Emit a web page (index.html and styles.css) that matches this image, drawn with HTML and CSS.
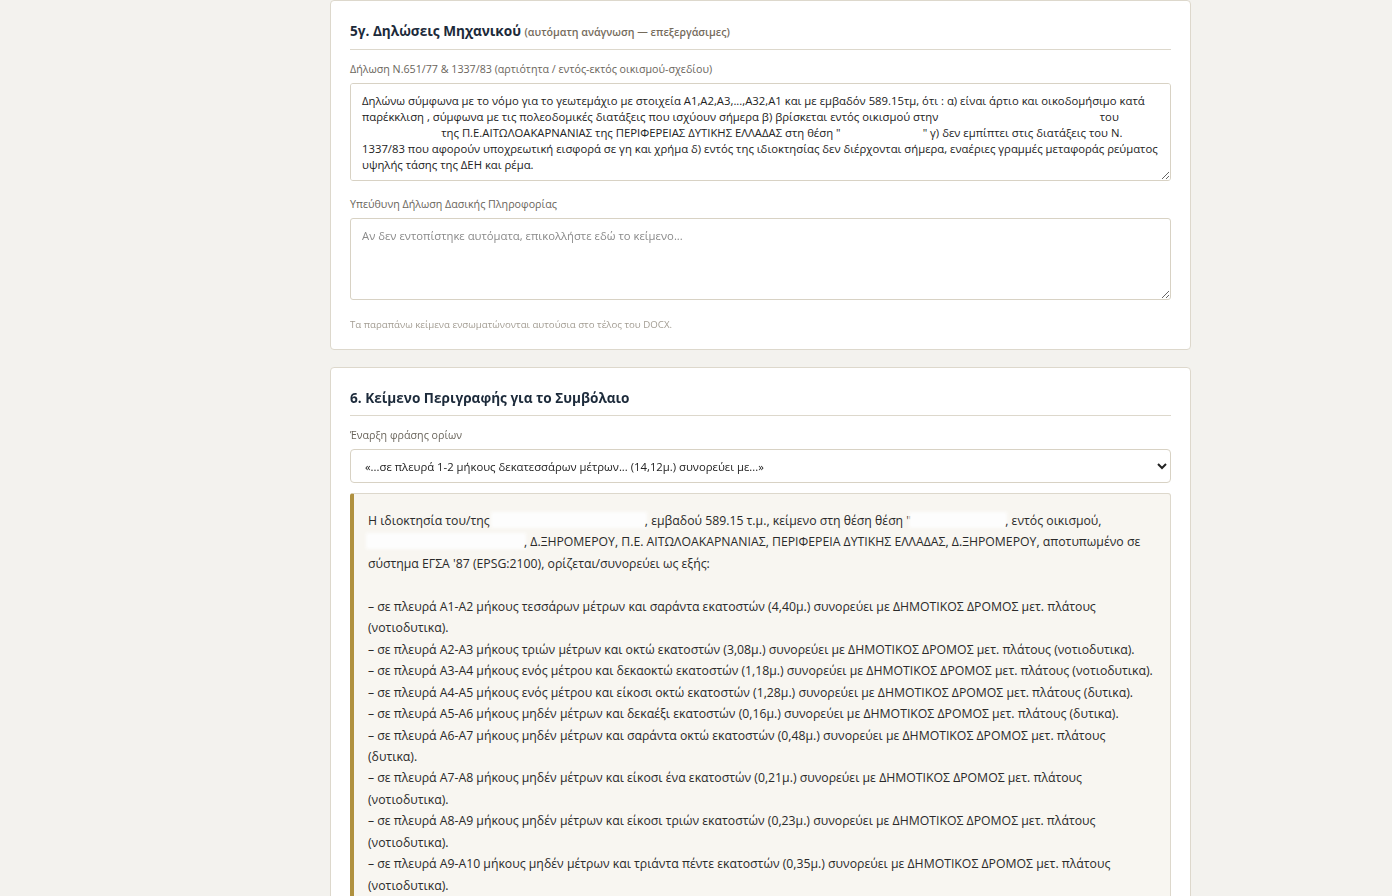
FILE: index.html
```html
<!DOCTYPE html>
<html lang="el">
<head>
    <meta charset="UTF-8">
    <meta name="viewport" content="width=device-width, initial-scale=1.0">
    <title>Τοπογραφικό — Δηλώσεις & Συμβόλαιο</title>
    <link rel="stylesheet" href="styles.css">
</head>
<body>
    <main class="content">

        <section class="card">
            <h2 class="card-title">5γ. Δηλώσεις Μηχανικού <small>(αυτόματη ανάγνωση — επεξεργάσιμες)</small></h2>

            <label class="field-label" for="decl651">Δήλωση Ν.651/77 &amp; 1337/83 (αρτιότητα / εντός-εκτός οικισμού-σχεδίου)</label>
            <textarea id="decl651" class="field-text tall">Δηλώνω σύμφωνα με το νόμο για το γεωτεμάχιο με στοιχεία Α1,Α2,Α3,...,Α32,Α1 και με εμβαδόν 589.15τμ, ότι : α) είναι άρτιο και οικοδομήσιμο κατά παρέκκλιση , σύμφωνα με τις πολεοδομικές διατάξεις που ισχύουν σήμερα β) βρίσκεται εντός οικισμού στην &nbsp;&nbsp;&nbsp;&nbsp;&nbsp;&nbsp;&nbsp;&nbsp;&nbsp;&nbsp;&nbsp;&nbsp;&nbsp;&nbsp;&nbsp;&nbsp;&nbsp;&nbsp;&nbsp;&nbsp;&nbsp;&nbsp;&nbsp;&nbsp;&nbsp;&nbsp;&nbsp;&nbsp;&nbsp;&nbsp;&nbsp;&nbsp;&nbsp;&nbsp;&nbsp;&nbsp;&nbsp;&nbsp;&nbsp;&nbsp;&nbsp;&nbsp;&nbsp;&nbsp;&nbsp;&nbsp;&nbsp;&nbsp;&nbsp;&nbsp;&nbsp;&nbsp;&nbsp; του &nbsp;&nbsp;&nbsp;&nbsp;&nbsp;&nbsp;&nbsp;&nbsp;&nbsp;&nbsp;&nbsp;&nbsp;&nbsp;&nbsp;&nbsp;&nbsp;&nbsp;&nbsp;&nbsp;&nbsp;&nbsp;&nbsp;&nbsp;&nbsp;&nbsp;&nbsp; της Π.Ε.ΑΙΤΩΛΟΑΚΑΡΝΑΝΙΑΣ της ΠΕΡΙΦΕΡΕΙΑΣ ΔΥΤΙΚΗΣ ΕΛΛΑΔΑΣ στη θέση "&nbsp;&nbsp;&nbsp;&nbsp;&nbsp;&nbsp;&nbsp;&nbsp;&nbsp;&nbsp;&nbsp;&nbsp;&nbsp;&nbsp;&nbsp;&nbsp;&nbsp;&nbsp;&nbsp;&nbsp;&nbsp;&nbsp;&nbsp;&nbsp;&nbsp;&nbsp;&nbsp;&nbsp;" γ) δεν εμπίπτει στις διατάξεις του Ν. 1337/83 που αφορούν υποχρεωτική εισφορά σε γη και χρήμα δ) εντός της ιδιοκτησίας δεν διέρχονται σήμερα, εναέριες γραμμές μεταφοράς ρεύματος υψηλής τάσης της ΔΕΗ και ρέμα.</textarea>

            <label class="field-label" for="forest">Υπεύθυνη Δήλωση Δασικής Πληροφορίας</label>
            <textarea id="forest" class="field-text short" placeholder="Αν δεν εντοπίστηκε αυτόματα, επικολλήστε εδώ το κείμενο..."></textarea>

            <p class="hint">Τα παραπάνω κείμενα ενσωματώνονται αυτούσια στο τέλος του DOCX.</p>
        </section>

        <section class="card">
            <h2 class="card-title">6. Κείμενο Περιγραφής για το Συμβόλαιο</h2>

            <label class="field-label" for="phrase">Έναρξη φράσης ορίων</label>
            <select id="phrase" class="field-select">
                <option>«...σε πλευρά 1-2 μήκους δεκατεσσάρων μέτρων... (14,12μ.) συνορεύει με...»</option>
                <option>«...από το σημείο 1 έως το σημείο 2...»</option>
            </select>

            <div class="preview">
                <p>Η ιδιοκτησία του/της <span class="redact w-ownr"></span>, εμβαδού 589.15 τ.μ., κείμενο στη θέση θέση "<span class="redact w-place"></span>, εντός οικισμού, <span class="redact w-area"></span>, Δ.ΞΗΡΟΜΕΡΟΥ, Π.Ε. ΑΙΤΩΛΟΑΚΑΡΝΑΝΙΑΣ, ΠΕΡΙΦΕΡΕΙΑ ΔΥΤΙΚΗΣ ΕΛΛΑΔΑΣ, Δ.ΞΗΡΟΜΕΡΟΥ, αποτυπωμένο σε σύστημα ΕΓΣΑ '87 (EPSG:2100), ορίζεται/συνορεύει ως εξής:</p>
                <ul class="sides">
                    <li>– σε πλευρά Α1-Α2 μήκους τεσσάρων μέτρων και σαράντα εκατοστών (4,40μ.) συνορεύει με ΔΗΜΟΤΙΚΟΣ ΔΡΟΜΟΣ μετ. πλάτους (νοτιοδυτικα).</li>
                    <li>– σε πλευρά Α2-Α3 μήκους τριών μέτρων και οκτώ εκατοστών (3,08μ.) συνορεύει με ΔΗΜΟΤΙΚΟΣ ΔΡΟΜΟΣ μετ. πλάτους (νοτιοδυτικα).</li>
                    <li>– σε πλευρά Α3-Α4 μήκους ενός μέτρου και δεκαοκτώ εκατοστών (1,18μ.) συνορεύει με ΔΗΜΟΤΙΚΟΣ ΔΡΟΜΟΣ μετ. πλάτους (νοτιοδυτικα).</li>
                    <li>– σε πλευρά Α4-Α5 μήκους ενός μέτρου και είκοσι οκτώ εκατοστών (1,28μ.) συνορεύει με ΔΗΜΟΤΙΚΟΣ ΔΡΟΜΟΣ μετ. πλάτους (δυτικα).</li>
                    <li>– σε πλευρά Α5-Α6 μήκους μηδέν μέτρων και δεκαέξι εκατοστών (0,16μ.) συνορεύει με ΔΗΜΟΤΙΚΟΣ ΔΡΟΜΟΣ μετ. πλάτους (δυτικα).</li>
                    <li>– σε πλευρά Α6-Α7 μήκους μηδέν μέτρων και σαράντα οκτώ εκατοστών (0,48μ.) συνορεύει με ΔΗΜΟΤΙΚΟΣ ΔΡΟΜΟΣ μετ. πλάτους (δυτικα).</li>
                    <li>– σε πλευρά Α7-Α8 μήκους μηδέν μέτρων και είκοσι ένα εκατοστών (0,21μ.) συνορεύει με ΔΗΜΟΤΙΚΟΣ ΔΡΟΜΟΣ μετ. πλάτους (νοτιοδυτικα).</li>
                    <li>– σε πλευρά Α8-Α9 μήκους μηδέν μέτρων και είκοσι τριών εκατοστών (0,23μ.) συνορεύει με ΔΗΜΟΤΙΚΟΣ ΔΡΟΜΟΣ μετ. πλάτους (νοτιοδυτικα).</li>
                    <li>– σε πλευρά Α9-Α10 μήκους μηδέν μέτρων και τριάντα πέντε εκατοστών (0,35μ.) συνορεύει με ΔΗΜΟΤΙΚΟΣ ΔΡΟΜΟΣ μετ. πλάτους (νοτιοδυτικα).</li>
                </ul>
            </div>
        </section>

    </main>
</body>
</html>
```

FILE: styles.css
```css
body {
    margin: 0;
    background-color: #f3f2ee;
    color: #222;
    font-family: "Open Sans", "Noto Sans", sans-serif;
}

.content {
    width: 861px;
    margin-left: 330px;
    display: flex;
    flex-direction: column;
    gap: 17px;
}

.card {
    background: #ffffff;
    border: 1px solid #ddd8cc;
    border-radius: 4px;
    padding: 19px 19px 17px 19px;
    display: flex;
    flex-direction: column;
}

.card-title {
    margin: 0 0 12px 0;
    padding-bottom: 6px;
    border-bottom: 1px solid #ddd8cc;
    font-size: 13.6px;
    line-height: 22px;
    font-weight: 700;
    color: #1c2a3a;
}
.card-title small {
    font-size: 10.6px;
    font-weight: 600;
    color: #756b5c;
}

.field-label {
    font-size: 10.7px;
    line-height: 15px;
    color: #6a655c;
    margin-bottom: 6px;
}

.field-text {
    box-sizing: border-box;
    width: 100%;
    border: 1px solid #d8d2c4;
    border-radius: 3px;
    padding: 9px 11px;
    font-family: inherit;
    font-size: 11.3px;
    line-height: 16px;
    color: #222;
    background: #fff;
    resize: vertical;
}
.field-text::placeholder {
    color: #8a8a8a;
}
.field-text.tall {
    height: 98px;
    margin-bottom: 16px;
}
.field-text.short {
    height: 82px;
}

.hint {
    margin: 18px 0 0 0;
    font-size: 9.7px;
    line-height: 14px;
    color: #a39d93;
}

.field-select {
    box-sizing: border-box;
    width: 100%;
    height: 34px;
    border: 1px solid #d8d2c4;
    border-radius: 4px;
    padding: 0 10px;
    font-family: inherit;
    font-size: 11.3px;
    color: #222;
    background: #fff;
    margin-bottom: 10px;
}

.preview {
    background: #f8f6f1;
    border: 1px solid #ddd8cc;
    border-left: 4px solid #b0913f;
    border-radius: 3px;
    padding: 16px 16px 15px 14px;
    font-size: 12.25px;
    line-height: 21.45px;
    color: #2a2a2a;
}
.preview p {
    margin: 0 0 21.45px 0;
}

.sides {
    list-style: none;
    margin: 0;
    padding: 0;
}

.redact {
    display: inline-block;
    height: 12px;
    vertical-align: -1px;
    background: #fdfdfd;
    box-shadow: 0 0 3px 2px #fdfdfd;
}
.w-ownr { width: 152px; }
.w-place { width: 94px; }
.w-area { width: 156px; }
```
